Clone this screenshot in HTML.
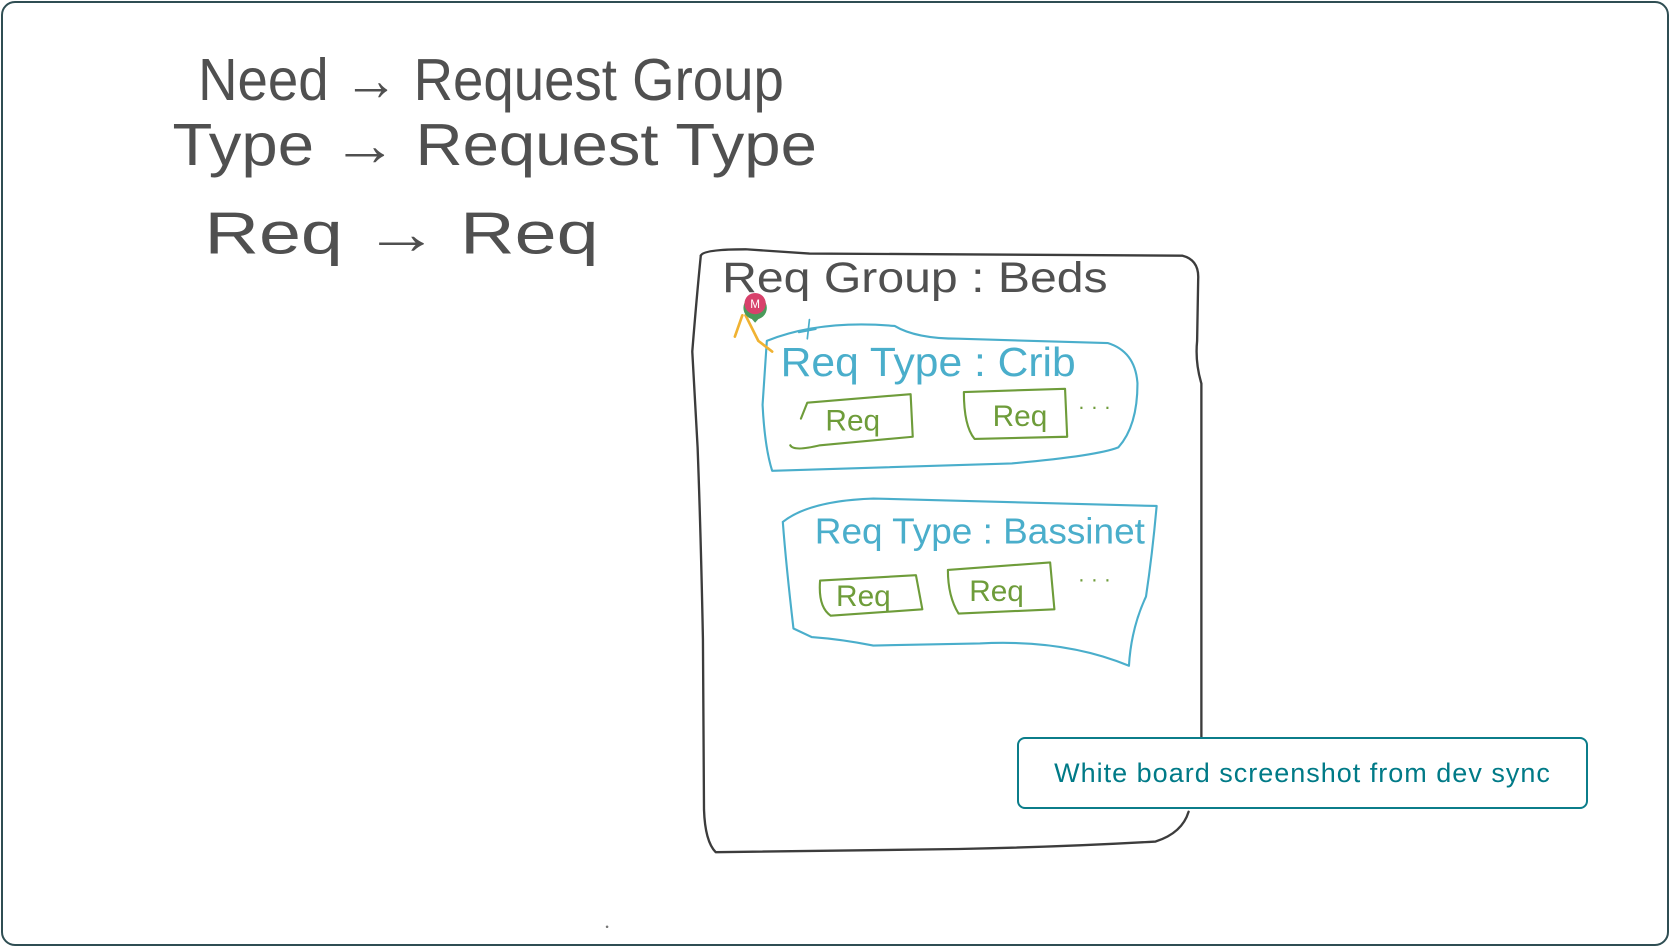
<!DOCTYPE html>
<html><head><meta charset="utf-8"><style>
html,body{margin:0;padding:0;background:#fff;}
.wrap{position:relative;width:1670px;height:947px;overflow:hidden;background:#fff;}
.frame{position:absolute;left:1px;top:1px;width:1664px;height:941px;border:2px solid #2f4e53;border-radius:14px;box-sizing:content-box;}
svg{position:absolute;left:0;top:0;}
.cap{position:absolute;left:1017px;top:737px;width:571px;height:72px;border:2px solid #0b7d8a;border-radius:8px;background:#fff;box-sizing:border-box;
font-family:"Liberation Sans",sans-serif;font-size:27px;color:#007a87;display:flex;align-items:center;justify-content:center;letter-spacing:1px;}
</style></head><body><div class="wrap">
<div class="frame"></div>
<svg width="1670" height="947" viewBox="0 0 1568 889" preserveAspectRatio="none" font-family="Liberation Sans Narrow, Liberation Sans, sans-serif">
<g fill="none" stroke-linecap="round" stroke-linejoin="round">
<path d="M658 240 Q660 234 700 234 L760 238 L1110 240 Q1126 244 1125 262 L1124 320 Q1122 340 1128 360 L1128 692" stroke="#3c3c3c" stroke-width="2.2"/>
<path d="M1116 762 Q1110 782 1085 790 Q1000 795 900 797 L672 800 Q662 790 661 760 L660 600 Q658 500 655 420 L650 330 Q654 280 658 240" stroke="#3c3c3c" stroke-width="2.2"/>
<path d="M720 320 Q770 300 840 306 Q860 318 900 318 L1040 322 Q1066 330 1068 360 Q1068 400 1050 420 Q1030 428 950 435 L725 442 Q718 420 716 380 Z" stroke="#4aaecb" stroke-width="2"/>
<path d="M735 490 Q760 470 820 468 L1086 475 Q1082 520 1076 560 Q1062 590 1060 625 Q1000 600 920 604 L820 606 Q790 600 762 598 L745 590 Q738 530 735 490" stroke="#4aaecb" stroke-width="2"/>
<path d="M752 393 L758 378 L855 370 L857 410 L770 418 Q745 424 742 418" stroke="#6e9c3a" stroke-width="2"/>
<path d="M905 368 L1000 365 L1002 410 L915 412 Q905 400 905 368" stroke="#6e9c3a" stroke-width="2"/>
<path d="M770 545 L860 540 L866 572 L780 578 Q768 570 770 545" stroke="#6e9c3a" stroke-width="2"/>
<path d="M890 535 L986 528 L990 572 L900 576 Q890 560 890 535" stroke="#6e9c3a" stroke-width="2"/>
<path d="M697 296 L690 316 M700 296 L712 320 L725 330" stroke="#f0b232" stroke-width="2.5"/>
<path d="M760 300 L758 318 M750 312 L766 309" stroke="#4aaecb" stroke-width="1.6"/>
</g>
<g fill="#505050">
<text x="186" y="94" font-size="56" textLength="550" lengthAdjust="spacingAndGlyphs">Need → Request Group</text>
<text x="162" y="155" font-size="56" textLength="605" lengthAdjust="spacingAndGlyphs">Type → Request Type</text>
<text x="192" y="238" font-size="56" textLength="370" lengthAdjust="spacingAndGlyphs">Req → Req</text>
<text x="678" y="274" font-size="40" textLength="362" lengthAdjust="spacingAndGlyphs">Req Group : Beds</text>
</g>
<g fill="#4aaecb">
<text x="733" y="353" font-size="38" textLength="277" lengthAdjust="spacingAndGlyphs">Req Type : Crib</text>
<text x="765" y="510" font-size="34" textLength="310" lengthAdjust="spacingAndGlyphs">Req Type : Bassinet</text>
</g>
<g fill="#6e9c3a" font-size="28">
<text x="775" y="404">Req</text>
<text x="932" y="400">Req</text>
<text x="785" y="569">Req</text>
<text x="910" y="564">Req</text>
<text x="1012" y="388" font-size="20">· · ·</text>
<text x="1012" y="550" font-size="20">· · ·</text>
</g>
<circle cx="709" cy="289" r="11" fill="#4a9a5a"/>
<path d="M701 294 L709 303 L717 294 Z" fill="#4a9a5a"/>
<circle cx="709" cy="285" r="10" fill="#d8416b"/>
<text x="709" y="289" font-size="11" fill="#fff" text-anchor="middle" font-family="Liberation Sans, sans-serif">M</text>
<circle cx="570" cy="870" r="1.2" fill="#777"/>
</svg>
<div class="cap">White board screenshot from dev sync</div>
</div></body></html>
